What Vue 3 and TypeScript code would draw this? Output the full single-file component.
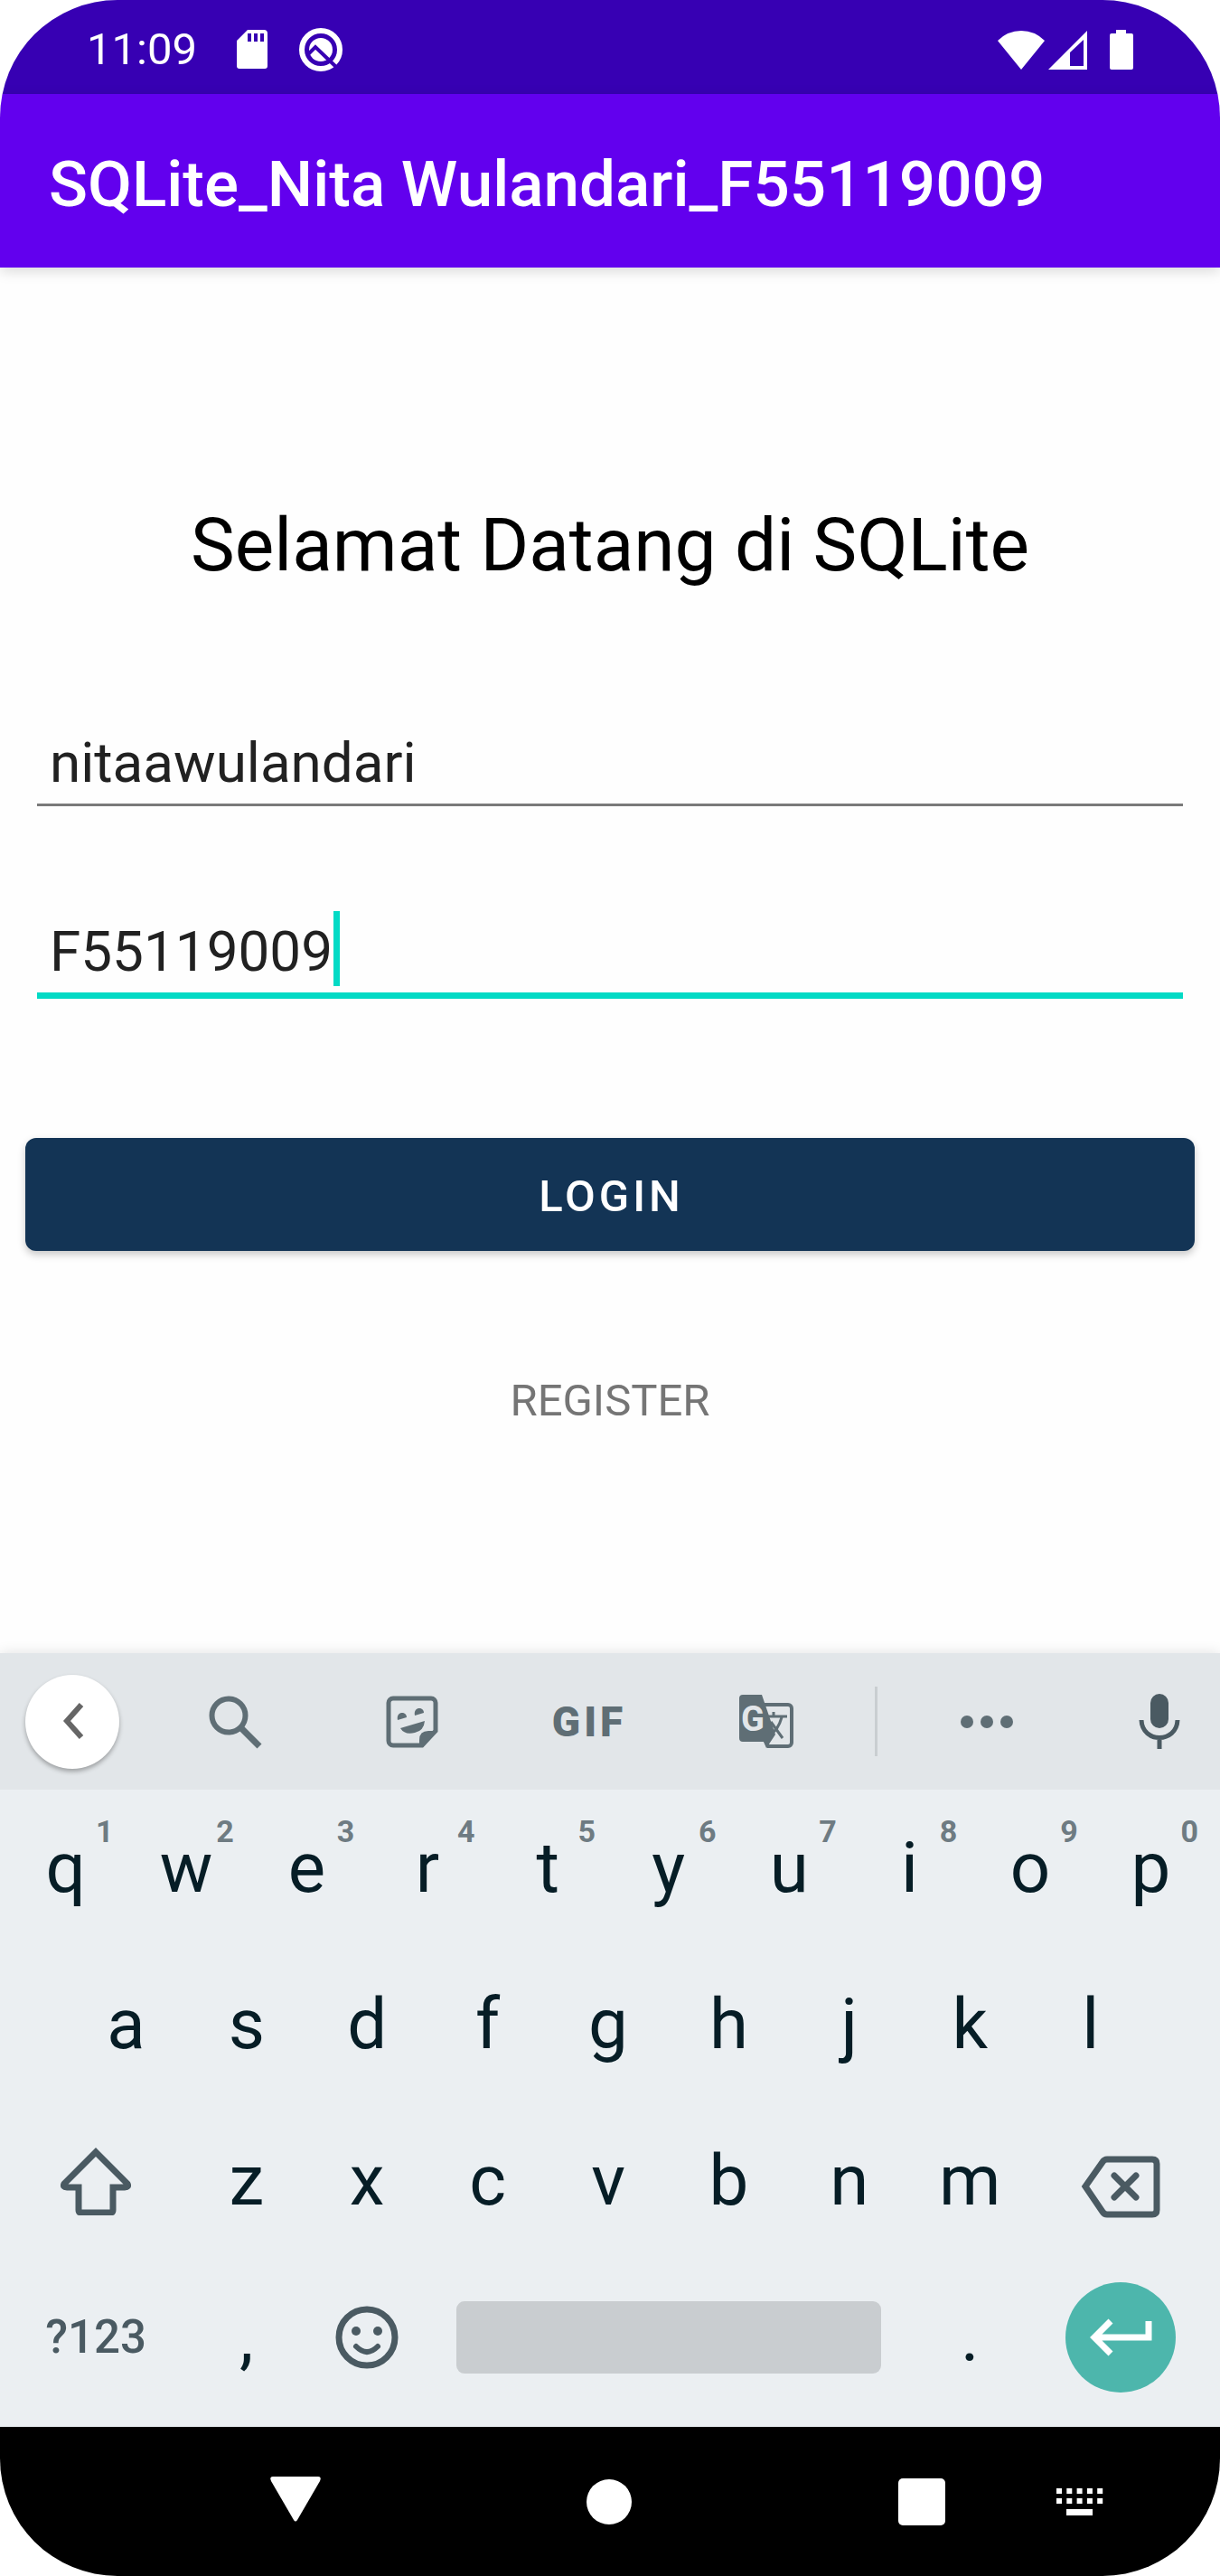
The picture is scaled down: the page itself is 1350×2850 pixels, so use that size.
<script setup lang="ts">
import { ref } from 'vue'

interface Key {
  label: string
  hint?: string
}

const username = ref('nitaawulandari')
const password = ref('F55119009')

const topRow: Key[] = [...'qwertyuiop'].map((label, i) => ({
  label,
  hint: String((i + 1) % 10),
}))
const homeRow = [...'asdfghjkl']
const bottomRow = [...'zxcvbnm']
</script>

<template>
  <div class="phone">
    <header class="status-bar">
      <span class="clock">11:09</span>
      <svg class="sd" width="36" height="44" viewBox="0 0 36 44" aria-hidden="true">
        <path fill="#fff" fill-rule="evenodd" d="M13 0H31a4 4 0 0 1 4 4V40a3 3 0 0 1-3 3H4a3 3 0 0 1-3-3V12ZM13 4V13H17V4ZM20 4V13H24V4ZM27 4V13H31V4Z" />
      </svg>
      <svg class="assist" width="48" height="48" viewBox="0 0 48 48" aria-hidden="true">
        <circle cx="24" cy="24" r="21" fill="none" stroke="#fff" stroke-width="6" />
        <circle cx="24" cy="24" r="13" fill="#fff" />
        <path d="M9 30L18 21L42 44" fill="none" stroke="#3700b3" stroke-width="4" />
      </svg>
      <span class="spacer"></span>
      <svg width="52" height="44" viewBox="0 0 52 44" aria-hidden="true">
        <path d="M0 12Q11 1 26 1T52 12L26 44Z" fill="#fff" />
      </svg>
      <svg class="signal" width="44" height="44" viewBox="0 0 44 44" aria-hidden="true">
        <path d="M0 44L43 1V44ZM24 25V40H39V11Z" fill="#fff" fill-rule="evenodd" />
      </svg>
      <svg class="battery" width="26" height="46" viewBox="0 0 26 46" aria-hidden="true">
        <path d="M7 1H18V5H24a2 2 0 0 1 2 2V43a2 2 0 0 1-2 2H2a2 2 0 0 1-2-2V7a2 2 0 0 1 2-2H7Z" fill="#fff" />
      </svg>
    </header>

    <div class="app-bar">
      <h1>SQLite_Nita Wulandari_F55119009</h1>
    </div>

    <main>
      <h2>Selamat Datang di SQLite</h2>
      <form @submit.prevent>
        <div class="field">
          <input v-model="username" type="text" aria-label="Username" autocomplete="off" spellcheck="false" />
        </div>
        <div class="field active">
          <input v-model="password" type="text" aria-label="Password" autocomplete="off" spellcheck="false" />
          <span class="caret"></span>
        </div>
        <button class="login" type="submit">LOGIN</button>
      </form>
      <a class="register" href="#">REGISTER</a>
    </main>

    <section class="keyboard" aria-label="Keyboard">
      <div class="tools">
        <button class="back" type="button" aria-label="Back">
          <svg width="32" height="44" viewBox="0 0 32 44"><path d="M26 3L10 21L26 39" fill="none" stroke="#666" stroke-width="6" /></svg>
        </button>
        <button type="button" aria-label="Search">
          <svg width="60" height="60" viewBox="0 0 60 60" fill="none" stroke="#5f6e75"><circle cx="23" cy="23" r="18.500" stroke-width="6" /><path d="M37 37L57 57" stroke-width="7" /></svg>
        </button>
        <button type="button" aria-label="Stickers">
          <svg width="60" height="60" viewBox="0 0 60 60" fill="#5f6e75">
            <path d="M9 4H51a5 5 0 0 1 5 5V40L41 56H9a5 5 0 0 1-5-5V9a5 5 0 0 1 5-5Z" fill="none" stroke="#5f6e75" stroke-width="5" />
            <path d="M58 40L42 58H38V50Q38 40 48 40Z" />
            <path d="M14 28C12 18 24 18 24 25ZM33 23C31 13 43 13 43 20ZM17 37L44 29Q43 40 33 42Q22 45 17 37Z" />
          </svg>
        </button>
        <button class="gif" type="button">GIF</button>
        <button type="button" aria-label="Translate">
          <svg width="62" height="62" viewBox="0 0 62 62">
            <path d="M29 12H55a4 4 0 0 1 4 4V54a4 4 0 0 1-4 4H33L27 46" fill="none" stroke="#5f6e75" stroke-width="4" />
            <path d="M5 1H26L41 45L31 60L28 53H5a4 4 0 0 1-4-4V5a4 4 0 0 1 4-4Z" fill="#5f6e75" />
            <path d="M32 25H54M39 20V26M48 26Q44 40 36 44M36 31L49 49" fill="none" stroke="#5f6e75" stroke-width="3" />
            <text x="3" y="41" class="g-mark">G</text>
          </svg>
        </button>
        <span class="divider"></span>
        <button type="button" aria-label="More">
          <svg width="60" height="16" viewBox="0 0 60 16" fill="#5f6e75"><circle cx="8" cy="8" r="7" /><circle cx="30" cy="8" r="7" /><circle cx="52" cy="8" r="7" /></svg>
        </button>
        <button class="mic" type="button" aria-label="Voice input">
          <svg width="46" height="64" viewBox="0 0 46 64" fill="none" stroke="#4a5a62">
            <rect x="13" y="1" width="20" height="38" rx="10" fill="#4a5a62" stroke="none" />
            <path d="M3 30C4 56 42 56 43 30M23 50V62" stroke-width="5" />
          </svg>
        </button>
      </div>

      <div class="keys">
        <div class="row">
          <button v-for="key in topRow" :key="key.label" type="button">
            {{ key.label }}<span class="hint">{{ key.hint }}</span>
          </button>
        </div>
        <div class="row home">
          <button v-for="key in homeRow" :key="key" type="button">{{ key }}</button>
        </div>
        <div class="row">
          <button class="wide" type="button" aria-label="Shift">
            <svg width="78" height="76" viewBox="0 0 78 76"><path d="M39 6L74 41Q76 45 71 45H58V70Q58 73 55 73H23Q20 73 20 70V45H7Q2 45 4 41Z" fill="none" stroke="#4a5a62" stroke-width="7" /></svg>
          </button>
          <button v-for="key in bottomRow" :key="key" type="button">{{ key }}</button>
          <button class="wide" type="button" aria-label="Backspace">
            <svg class="delete" width="88" height="70" viewBox="0 0 88 70" fill="none" stroke="#4a5a62" stroke-width="7">
              <path d="M29 5H79Q84 5 84 10V61Q84 66 79 66H29Q26 66 24 63L5 35L24 8Q26 5 29 5Z" />
              <path d="M37 23L61 47M61 23L37 47" stroke-linecap="round" />
            </svg>
          </button>
        </div>
        <div class="row">
          <button class="wide symbols" type="button">?123</button>
          <button type="button">,</button>
          <button type="button" aria-label="Emoji">
            <svg width="70" height="70" viewBox="0 0 70 70" fill="none" stroke="#4a5a62" stroke-width="7">
              <circle cx="35" cy="35" r="31" />
              <path d="M23 45Q35 57 47 45" stroke-linecap="round" stroke-width="6" />
              <circle cx="23" cy="28" r="5" fill="#4a5a62" stroke="none" />
              <circle cx="47" cy="28" r="5" fill="#4a5a62" stroke="none" />
            </svg>
          </button>
          <button class="space" type="button" aria-label="Space"><span></span></button>
          <button type="button">.</button>
          <button class="wide" type="button" aria-label="Enter">
            <span class="enter">
              <svg width="70" height="42" viewBox="0 0 70 42" fill="none" stroke="#fff" stroke-width="7"><path d="M66 3V21H6M24 3L6 21L24 39" /></svg>
            </span>
          </button>
        </div>
      </div>
    </section>

    <nav class="nav-bar" aria-label="System navigation">
      <button class="hide" type="button" aria-label="Hide keyboard">
        <svg width="56" height="56" viewBox="0 0 56 56"><path d="M3 0H53Q57 0 55 5L30 48Q28 51 26 48L1 5Q-1 0 3 0Z" fill="#fff" /></svg>
      </button>
      <button type="button" aria-label="Home">
        <svg width="52" height="52" viewBox="0 0 52 52"><circle cx="26" cy="26" r="25" fill="#fff" /></svg>
      </button>
      <button type="button" aria-label="Recents">
        <svg width="52" height="52" viewBox="0 0 52 52"><rect width="52" height="52" rx="5" fill="#fff" /></svg>
      </button>
      <button type="button" aria-label="Switch keyboard">
        <svg width="54" height="30" viewBox="0 0 54 30"><path d="M1 3H53M1 14H53" stroke="#fff" stroke-width="6" stroke-dasharray="6 5.300" /><path d="M12 23H41V30H12Z" fill="#fff" /></svg>
      </button>
    </nav>
  </div>
</template>

<style>
body {
  margin: 0;
  background: #fff;
}
</style>

<style scoped>
.phone {
  display: flex;
  flex-direction: column;
  min-height: 100vh;
  overflow: hidden;
  border-radius: 130px;
  background: #fefefe;
  font-family: Roboto, "Liberation Sans", sans-serif;
}

svg {
  display: block;
  flex: none;
}

button {
  padding: 0;
  border: 0;
  background: none;
  color: inherit;
  font: inherit;
}

.status-bar {
  display: flex;
  align-items: center;
  box-sizing: border-box;
  height: 104px;
  padding: 6px 96px 0 96px;
  background: #3700b3;
  color: #fff;
}

.clock {
  font-size: 49px;
  line-height: 58px;
}

.sd {
  margin-left: 43px;
}

.assist {
  margin-left: 34px;
}

.spacer {
  flex: 1;
}

.signal {
  margin-left: 4px;
}

.battery {
  margin-left: 24px;
}

.app-bar {
  display: flex;
  align-items: center;
  box-sizing: border-box;
  height: 192px;
  padding: 8px 54px 0;
  background: #6200ee;
  box-shadow: 0 4px 14px rgba(0, 0, 0, 0.15);
  color: #fff;
}

h1 {
  margin: 0;
  font-size: 71px;
  font-weight: 500;
  line-height: 84px;
  white-space: nowrap;
}

main {
  display: flex;
  flex: 1;
  flex-direction: column;
  padding: 259px 28px 0;
}

h2 {
  margin: 0 0 143px;
  color: #000;
  font-size: 82px;
  font-weight: 400;
  line-height: 96px;
  text-align: center;
}

form {
  display: flex;
  flex-direction: column;
}

.field {
  position: relative;
  margin: 0 13px 111px;
  border-bottom: 3px solid #7a7a7a;
}

.field.active {
  margin-bottom: 154px;
  border-bottom: 7px solid #03dac5;
}

.field input {
  display: block;
  box-sizing: border-box;
  width: 100%;
  height: 95px;
  padding: 3px 14px 0;
  border: 0;
  outline: 0;
  background: none;
  color: #212121;
  font: 400 62px/76px Roboto, "Liberation Sans", sans-serif;
}

.caret {
  position: absolute;
  top: 5px;
  left: 328px;
  width: 7px;
  height: 83px;
  background: #03dac5;
}

.login {
  height: 125px;
  padding: 3px 0 0 3px;
  border-radius: 12px;
  background: #133455;
  box-shadow: 0 4px 8px rgba(0, 0, 0, 0.22);
  color: #fff;
  font-size: 49px;
  font-weight: 500;
  letter-spacing: 4px;
}

.register {
  align-self: center;
  margin-top: 138px;
  color: #757575;
  font-size: 49px;
  line-height: 56px;
  text-decoration: none;
}

.keyboard {
  background: #ebeff2;
  box-shadow: 0 0 14px rgba(0, 0, 0, 0.12);
  color: #061d26;
}

.tools {
  display: grid;
  grid-template-columns: 162fr repeat(4, 196fr) 46fr 200fr 158fr;
  align-items: center;
  height: 151px;
  background: #e2e6e9;
}

.tools button {
  display: flex;
  align-items: center;
  justify-content: center;
}

.tools .back {
  width: 104px;
  height: 104px;
  margin-left: 28px;
  border-radius: 50%;
  background: #fff;
  box-shadow: 0 3px 5px rgba(0, 0, 0, 0.3);
}

.tools .gif {
  color: #5f6e75;
  font-size: 46px;
  font-weight: 900;
  letter-spacing: 4px;
}

.g-mark {
  fill: #e2e6e9;
  font-size: 38px;
  font-weight: 700;
}

.divider {
  justify-self: center;
  width: 3px;
  height: 77px;
  background: #c9ced1;
}

.tools .mic {
  padding-left: 24px;
}

.keys {
  padding: 0 10px 13px 6px;
}

.row {
  display: flex;
  height: 173px;
}

.row.home {
  padding: 0 5%;
}

.row button {
  position: relative;
  display: flex;
  flex: 2 1 0;
  align-items: center;
  justify-content: center;
  min-width: 0;
  font-size: 78px;
  line-height: 92px;
}

.row .wide {
  flex-grow: 3;
}

.row .symbols {
  color: #4a5a62;
  font-size: 51px;
  font-weight: 500;
}

.hint {
  position: absolute;
  top: 26px;
  right: 14px;
  color: #6e7b82;
  font-size: 34px;
  font-weight: 700;
  line-height: 40px;
}

.delete {
  margin-top: 12px;
}

.row .space {
  flex-grow: 8;
}

.space span {
  flex: 1;
  height: 80px;
  margin: 0 32px;
  border-radius: 9px;
  background: #c9cdd0;
}

.enter {
  display: flex;
  align-items: center;
  justify-content: center;
  width: 122px;
  height: 122px;
  border-radius: 50%;
  background: #4db6ac;
}

.nav-bar {
  display: grid;
  grid-template-columns: 174fr 522fr 174fr 176fr;
  height: 165px;
  padding: 0 5% 0 240px;
  background: #000;
}

.nav-bar button {
  display: flex;
  align-items: center;
  justify-content: center;
}
</style>
